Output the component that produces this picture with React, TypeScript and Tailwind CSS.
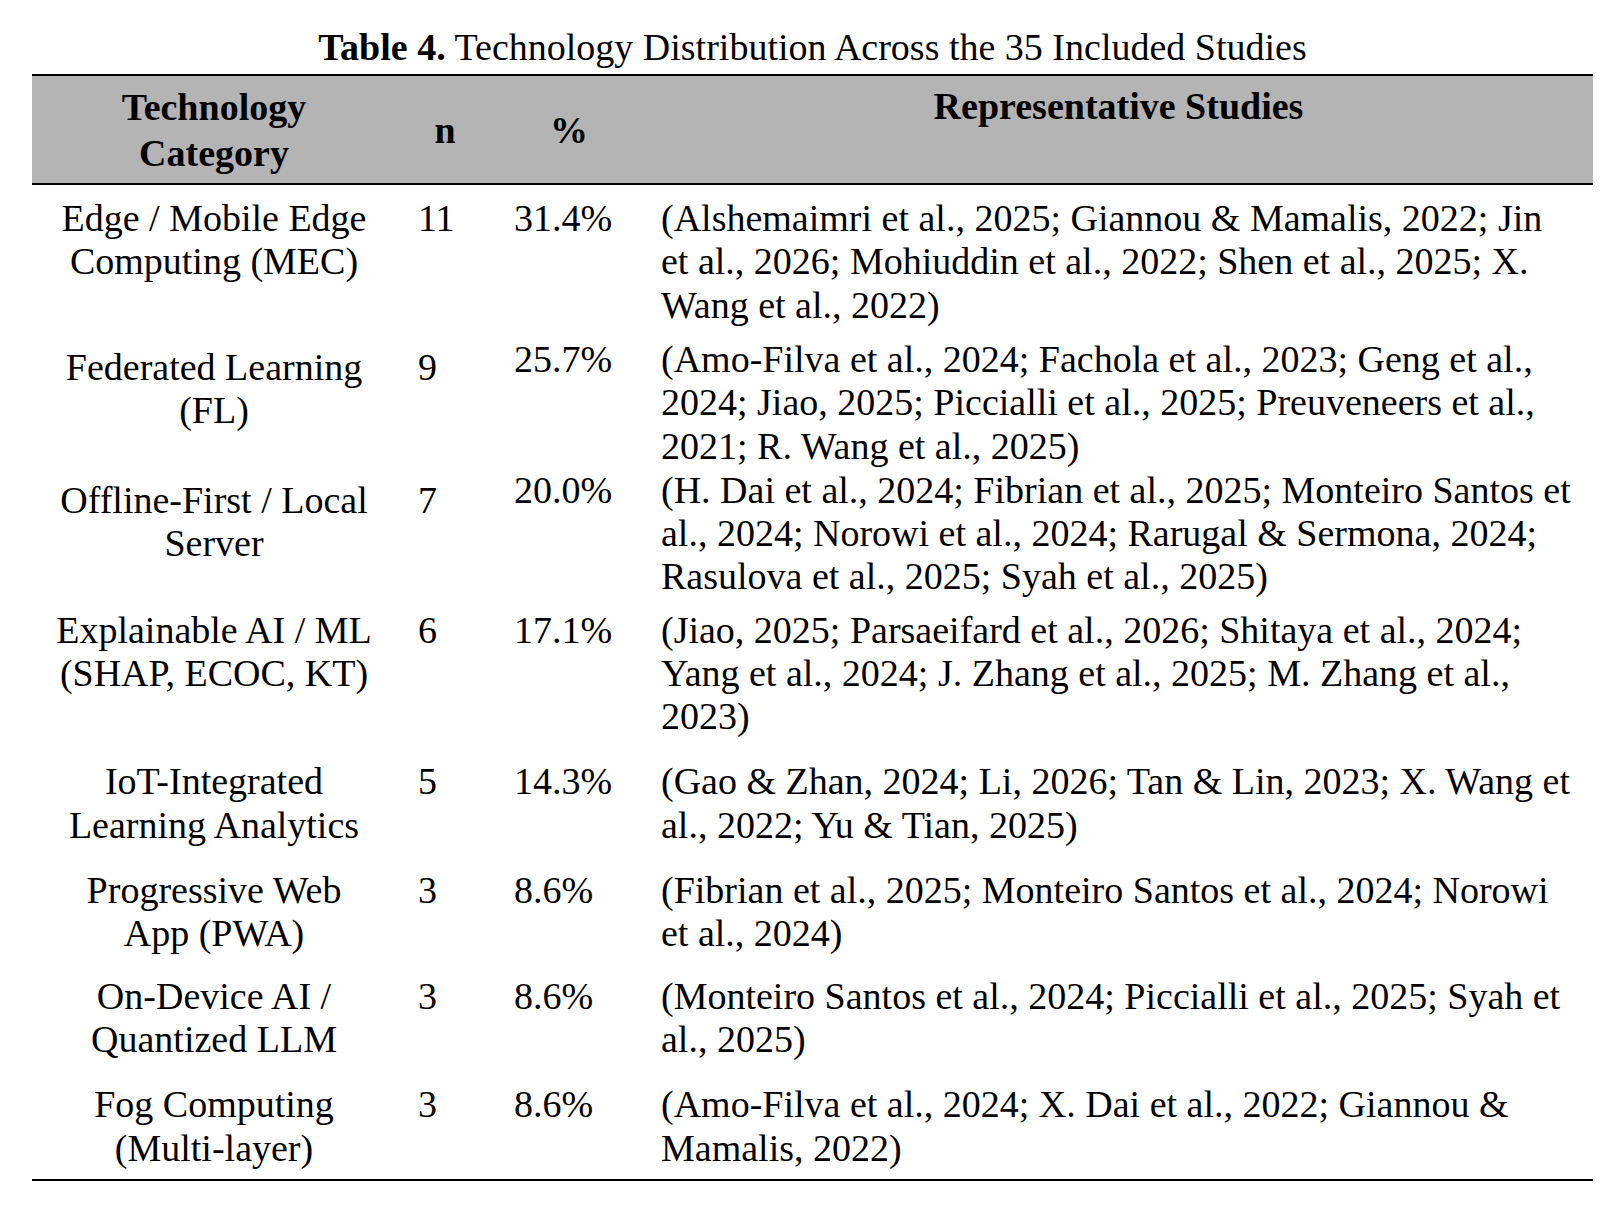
import React from 'react';

type Row = {
  category: string[];
  n: string;
  pct: string;
  studies: string[];
  leftTop: string; // padding for category + n cells
  rightTop: string; // padding for % + studies cells
};

const rows: Row[] = [
  {
    category: ['Edge / Mobile Edge', 'Computing (MEC)'],
    n: '11',
    pct: '31.4%',
    studies: [
      '(Alshemaimri et al., 2025; Giannou & Mamalis, 2022; Jin',
      'et al., 2026; Mohiuddin et al., 2022; Shen et al., 2025; X.',
      'Wang et al., 2022)',
    ],
    leftTop: 'pt-[12.2px]',
    rightTop: 'pt-[12.2px]',
  },
  {
    category: ['Federated Learning', '(FL)'],
    n: '9',
    pct: '25.7%',
    studies: [
      '(Amo-Filva et al., 2024; Fachola et al., 2023; Geng et al.,',
      '2024; Jiao, 2025; Piccialli et al., 2025; Preuveneers et al.,',
      '2021; R. Wang et al., 2025)',
    ],
    leftTop: 'pt-[18.9px]',
    rightTop: 'pt-[11.1px]',
  },
  {
    category: ['Offline-First / Local', 'Server'],
    n: '7',
    pct: '20.0%',
    studies: [
      '(H. Dai et al., 2024; Fibrian et al., 2025; Monteiro Santos et',
      'al., 2024; Norowi et al., 2024; Rarugal & Sermona, 2024;',
      'Rasulova et al., 2025; Syah et al., 2025)',
    ],
    leftTop: 'pt-[10.7px]',
    rightTop: 'pt-[0.7px]',
  },
  {
    category: ['Explainable AI / ML', '(SHAP, ECOC, KT)'],
    n: '6',
    pct: '17.1%',
    studies: [
      '(Jiao, 2025; Parsaeifard et al., 2026; Shitaya et al., 2024;',
      'Yang et al., 2024; J. Zhang et al., 2025; M. Zhang et al.,',
      '2023)',
    ],
    leftTop: 'pt-[10.1px]',
    rightTop: 'pt-[10.1px]',
  },
  {
    category: ['IoT-Integrated', 'Learning Analytics'],
    n: '5',
    pct: '14.3%',
    studies: [
      '(Gao & Zhan, 2024; Li, 2026; Tan & Lin, 2023; X. Wang et',
      'al., 2022; Yu & Tian, 2025)',
    ],
    leftTop: 'pt-[21.8px]',
    rightTop: 'pt-[21.8px]',
  },
  {
    category: ['Progressive Web', 'App (PWA)'],
    n: '3',
    pct: '8.6%',
    studies: [
      '(Fibrian et al., 2025; Monteiro Santos et al., 2024; Norowi',
      'et al., 2024)',
    ],
    leftTop: 'pt-[21.7px]',
    rightTop: 'pt-[21.7px]',
  },
  {
    category: ['On-Device AI /', 'Quantized LLM'],
    n: '3',
    pct: '8.6%',
    studies: [
      '(Monteiro Santos et al., 2024; Piccialli et al., 2025; Syah et',
      'al., 2025)',
    ],
    leftTop: 'pt-[20.1px]',
    rightTop: 'pt-[20.1px]',
  },
  {
    category: ['Fog Computing', '(Multi-layer)'],
    n: '3',
    pct: '8.6%',
    studies: [
      '(Amo-Filva et al., 2024; X. Dai et al., 2022; Giannou &',
      'Mamalis, 2022)',
    ],
    leftTop: 'pt-[21.7px]',
    rightTop: 'pt-[21.7px]',
  },
];

const cols = 'grid grid-cols-[364px_98px_150px_949px]';

const App = () => {
  return (
    <div className="min-h-screen bg-white text-black font-['Liberation_Serif','Times_New_Roman',serif] text-[38px] leading-[43.3px]">
      <div className="w-[1593px] pl-[32px] pt-[25.5px]">
        <p className="text-center whitespace-nowrap">
          <span className="font-bold">Table 4.</span> Technology Distribution Across the 35 Included Studies
        </p>

        <div className="mt-[5px] border-t-2 border-b-2 border-black">
          {/* Header */}
          <div className={`${cols} h-[109px] bg-[#b4b4b4] border-b-2 border-black font-bold`}>
            <div className="pt-[8px] text-center leading-[46px]">
              <div>Technology</div>
              <div>Category</div>
            </div>
            <div className="pt-[33.5px] text-center">n</div>
            <div className="pt-[33.5px] text-center">%</div>
            <div className="pt-[9.5px] text-center">Representative Studies</div>
          </div>

          {/* Body */}
          <div className="pb-[9.4px]">
            {rows.map((row) => (
              <div key={row.n + row.pct + row.category[0]} className={cols}>
                <div className={`${row.leftTop} text-center whitespace-nowrap`}>
                  {row.category.map((line) => (
                    <div key={line}>{line}</div>
                  ))}
                </div>
                <div className={`${row.leftTop} pl-[22px]`}>{row.n}</div>
                <div className={`${row.rightTop} pl-[20px]`}>{row.pct}</div>
                <div className={`${row.rightTop} pl-[17px] whitespace-nowrap`}>
                  {row.studies.map((line) => (
                    <div key={line}>{line}</div>
                  ))}
                </div>
              </div>
            ))}
          </div>
        </div>
      </div>
    </div>
  );
};

export default App;
